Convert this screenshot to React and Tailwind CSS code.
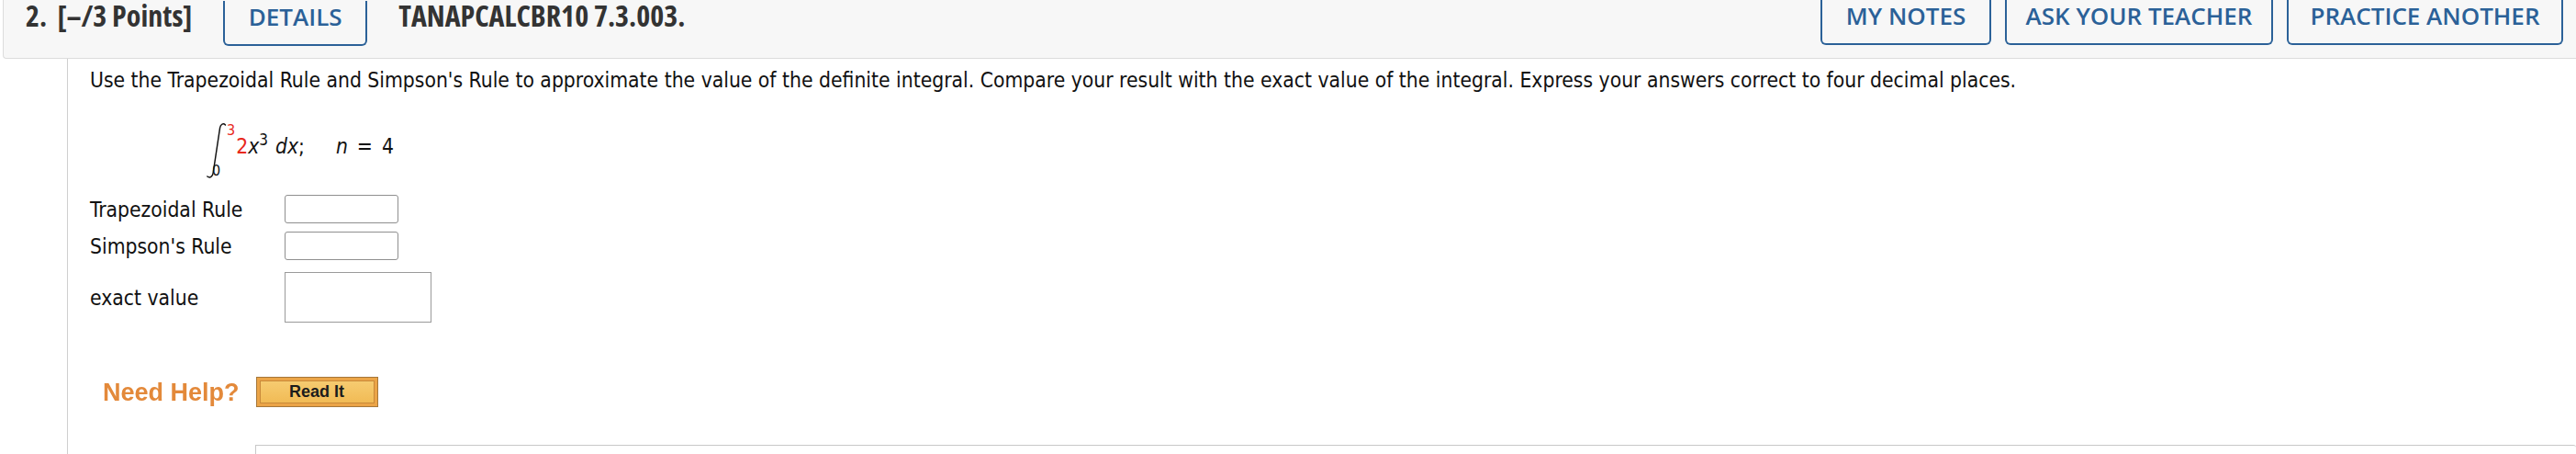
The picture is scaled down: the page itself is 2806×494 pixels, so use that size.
import React from 'react';

const headerBtn =
  "flex h-[49px] items-start justify-center rounded-b-[6px] border-2 border-t-0 border-[#2b6198] pt-[1px] text-[26px] leading-[32px] font-semibold font-stretch-[96%] text-[#2b6198]";

const headerText = "text-[32px] leading-[32px] font-bold font-stretch-[80%] text-[#333]";

function IntegralSign() {
  return (
    <svg width="24" height="62" viewBox="0 0 24 62" className="shrink-0">
      <path
        d="M22.5 3 C20.5 0.8 17.2 1.8 16.6 6 L9.2 55 C8.6 59.5 5.8 61 2.8 59"
        fill="none"
        stroke="#111"
        strokeWidth="1.5"
        strokeLinecap="round"
      />
    </svg>
  );
}

export default function App() {
  return (
    <div className="h-[494px] w-full overflow-hidden bg-white font-['DejaVu_Sans_Condensed','DejaVu_Sans',sans-serif] text-[#111]">
      {/* question header */}
      <div className="ml-[3px] flex h-[64px] rounded-bl-[4px] border-b border-l border-[#dcdcdc] bg-[#f7f7f7] pl-[24px] pr-[14px] font-['Open_Sans',sans-serif]">
        <div className="flex h-[49px] items-start pt-[1px]">
          <span className={`whitespace-pre ${headerText}`}>2.  [–/3 Points]</span>
          <div className={`${headerBtn} ml-[34px] w-[157px]`}>DETAILS</div>
          <span className={`ml-[34px] ${headerText}`}>TANAPCALCBR10 7.3.003.</span>
        </div>
        <div className="ml-auto flex gap-[15px]">
          <div className={`${headerBtn} w-[186px]`}>MY NOTES</div>
          <div className={`${headerBtn} w-[292px]`}>ASK YOUR TEACHER</div>
          <div className={`${headerBtn} w-[301px]`}>PRACTICE ANOTHER</div>
        </div>
      </div>

      {/* question body */}
      <div className="ml-[73px] flex h-[430px] flex-col border-l border-[#cfcfcf] pl-[24px]">
        <p className="mt-[9px] text-[22.7px] leading-[28px]">
          Use the Trapezoidal Rule and Simpson's Rule to approximate the value of the definite integral. Compare your result with the exact value of the integral. Express your answers correct to four decimal places.
        </p>

        <div className="ml-[125px] mt-[32px] flex h-[62px] items-start">
          <IntegralSign />
          <div className="flex h-[62px] flex-col justify-between">
            <span className="text-[16px] leading-[18px] text-[#e8291c]">3</span>
            <span className="-ml-[16px] text-[16px] leading-[18px]">0</span>
          </div>
          <div className="ml-[1px] mt-[13px] flex items-baseline text-[22.7px] leading-[26px]">
            <span className="text-[#e8291c]">2</span>
            <span className="italic">x</span>
            <span className="relative -top-[9px] text-[17px]">3</span>
            <span className="ml-[8px] italic">dx</span>
            <span>;</span>
            <span className="ml-[34px] italic">n</span>
            <span className="ml-[10px]">=</span>
            <span className="ml-[10px]">4</span>
          </div>
        </div>

        <div className="mt-[17px] flex flex-col gap-[9px]">
          <div className="flex items-center">
            <span className="w-[212px] text-[22.7px] leading-[28px]">Trapezoidal Rule</span>
            <div className="h-[31px] w-[124px] rounded-[3px] border border-[#8f8f8f] bg-white"></div>
          </div>
          <div className="flex items-center">
            <span className="w-[212px] text-[22.7px] leading-[28px]">Simpson's Rule</span>
            <div className="h-[31px] w-[124px] rounded-[3px] border border-[#8f8f8f] bg-white"></div>
          </div>
          <div className="mt-[4px] flex items-center">
            <span className="w-[212px] text-[22.7px] leading-[28px]">exact value</span>
            <div className="h-[55px] w-[160px] border border-[#9a9a9a] bg-white"></div>
          </div>
        </div>

        <div className="ml-[14px] mt-[59px] flex items-center">
          <span className="font-['Liberation_Sans',Arial,sans-serif] text-[27px] leading-[32px] font-bold text-[#e3893a] blur-[0.4px]">Need Help?</span>
          <div className="ml-[18px] h-[33px] w-[133px] border border-[#a5773a] bg-[#eba447] p-[3px]">
            <div className="flex h-full w-full items-center justify-center border border-[#c98939] bg-gradient-to-b from-[#f6cb70] to-[#f1bb55] font-['Liberation_Sans',Arial,sans-serif] text-[18px] font-bold text-[#1c1c1c]">
              Read It
            </div>
          </div>
        </div>

        <div className="ml-[180px] mt-[41px] h-[40px] rounded-tr-[3px] border-l border-t border-[#c8c8c8]"></div>
      </div>
    </div>
  );
}
